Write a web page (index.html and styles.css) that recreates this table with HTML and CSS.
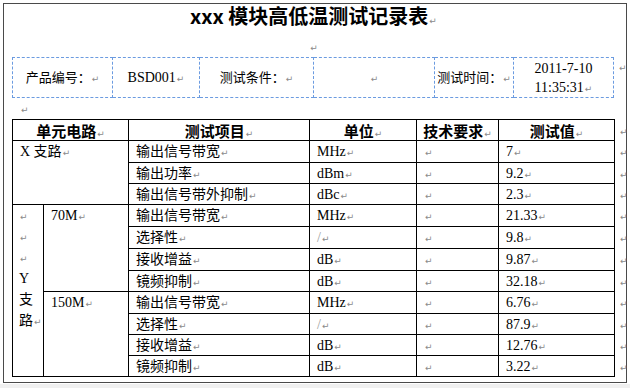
FILE: index.html
```html
<!DOCTYPE html>
<html lang="zh-CN">
<head>
<meta charset="utf-8">
<title>xxx 模块高低温测试记录表</title>
<link rel="stylesheet" href="styles.css">
</head>
<body>
<div class="page">
  <div class="frame">
    <h1 class="title">xxx 模块高低温测试记录表<span class="pm">↵</span></h1>
    <p class="blank center"><span class="pm">↵</span></p>
    <div class="inforow">
      <table class="info">
        <colgroup>
          <col class="c100"><col class="c87"><col class="c114"><col class="c121"><col class="c79"><col class="c100">
        </colgroup>
        <tr>
          <td>产品编号：<span class="pm">↵</span></td>
          <td class="lat">BSD001<span class="pm">↵</span></td>
          <td>测试条件：<span class="pm">↵</span></td>
          <td><span class="pm">↵</span></td>
          <td>测试时间：<span class="pm">↵</span></td>
          <td class="lat date">2011-7-10<br>11:35:31<span class="pm">↵</span></td>
        </tr>
      </table>
      <span class="rowmark"><span class="pm">↵</span></span>
    </div>
    <p class="blank indent"><span class="pm">↵</span></p>
    <table class="main">
      <colgroup>
        <col class="m31"><col class="m85"><col class="m181"><col class="m107"><col class="m82"><col class="m116"><col class="ceor">
      </colgroup>
      <tr class="head">
        <th colspan="2">单元电路<span class="pm">↵</span></th>
        <th>测试项目<span class="pm">↵</span></th>
        <th>单位<span class="pm">↵</span></th>
        <th>技术要求<span class="pm">↵</span></th>
        <th>测试值<span class="pm">↵</span></th>
        <td class="eor"><span class="pm">↵</span></td>
      </tr>
      <tr class="tall">
        <td colspan="2" rowspan="3" class="top">X 支路<span class="pm">↵</span></td>
        <td>输出信号带宽<span class="pm">↵</span></td>
        <td>MHz<span class="pm">↵</span></td>
        <td><span class="pm">↵</span></td>
        <td>7<span class="pm">↵</span></td>
        <td class="eor"><span class="pm">↵</span></td>
      </tr>
      <tr>
        <td>输出功率<span class="pm">↵</span></td>
        <td>dBm<span class="pm">↵</span></td>
        <td><span class="pm">↵</span></td>
        <td>9.2<span class="pm">↵</span></td>
        <td class="eor"><span class="pm">↵</span></td>
      </tr>
      <tr>
        <td>输出信号带外抑制<span class="pm">↵</span></td>
        <td>dBc<span class="pm">↵</span></td>
        <td><span class="pm">↵</span></td>
        <td>2.3<span class="pm">↵</span></td>
        <td class="eor"><span class="pm">↵</span></td>
      </tr>
      <tr class="tall">
        <td rowspan="8" class="top ycell"><span class="pm">↵</span><br><span class="pm">↵</span><br><span class="pm">↵</span><br>Y<br>支<br>路<span class="pm">↵</span></td>
        <td rowspan="4" class="top">70M<span class="pm">↵</span></td>
        <td>输出信号带宽<span class="pm">↵</span></td>
        <td>MHz<span class="pm">↵</span></td>
        <td><span class="pm">↵</span></td>
        <td>21.33<span class="pm">↵</span></td>
        <td class="eor"><span class="pm">↵</span></td>
      </tr>
      <tr class="tall">
        <td>选择性<span class="pm">↵</span></td>
        <td class="dim">/<span class="pm">↵</span></td>
        <td><span class="pm">↵</span></td>
        <td>9.8<span class="pm">↵</span></td>
        <td class="eor"><span class="pm">↵</span></td>
      </tr>
      <tr class="tall">
        <td>接收增益<span class="pm">↵</span></td>
        <td>dB<span class="pm">↵</span></td>
        <td><span class="pm">↵</span></td>
        <td>9.87<span class="pm">↵</span></td>
        <td class="eor"><span class="pm">↵</span></td>
      </tr>
      <tr>
        <td>镜频抑制<span class="pm">↵</span></td>
        <td>dB<span class="pm">↵</span></td>
        <td><span class="pm">↵</span></td>
        <td>32.18<span class="pm">↵</span></td>
        <td class="eor"><span class="pm">↵</span></td>
      </tr>
      <tr class="tall">
        <td rowspan="4" class="top">150M<span class="pm">↵</span></td>
        <td>输出信号带宽<span class="pm">↵</span></td>
        <td>MHz<span class="pm">↵</span></td>
        <td><span class="pm">↵</span></td>
        <td>6.76<span class="pm">↵</span></td>
        <td class="eor"><span class="pm">↵</span></td>
      </tr>
      <tr>
        <td>选择性<span class="pm">↵</span></td>
        <td class="dim">/<span class="pm">↵</span></td>
        <td><span class="pm">↵</span></td>
        <td>87.9<span class="pm">↵</span></td>
        <td class="eor"><span class="pm">↵</span></td>
      </tr>
      <tr>
        <td>接收增益<span class="pm">↵</span></td>
        <td>dB<span class="pm">↵</span></td>
        <td><span class="pm">↵</span></td>
        <td>12.76<span class="pm">↵</span></td>
        <td class="eor"><span class="pm">↵</span></td>
      </tr>
      <tr>
        <td>镜频抑制<span class="pm">↵</span></td>
        <td>dB<span class="pm">↵</span></td>
        <td><span class="pm">↵</span></td>
        <td>3.22<span class="pm">↵</span></td>
        <td class="eor"><span class="pm">↵</span></td>
      </tr>
    </table>
  </div>
</div>
</body>
</html>
```
FILE: styles.css
```css
html, body {
  margin: 0;
  background: #f0f0f0;
}
body {
  font-family: "Liberation Serif", "Noto Sans CJK SC", serif;
  font-size: 14px;
  color: #000;
}
.page {
  background: #fff;
  height: 384px;
  padding: 3px 3px 0 3px;
  box-sizing: border-box;
}
.frame {
  height: 380px;
  border: 1px solid #4a4a4a;
  box-sizing: border-box;
  padding: 0 11px 0 8px;
}
.title {
  margin: 0;
  height: 24px;
  font-family: "Noto Sans CJK SC", sans-serif;
  font-size: 20px;
  font-weight: 700;
  line-height: 24px;
  text-align: center;
}
.blank {
  margin: 0;
  height: 21px;
  line-height: 21px;
}
.blank.center {
  margin-top: 8px;
  text-align: center;
}
.blank.indent {
  padding-left: 8px;
}
.pm {
  font-family: "DejaVu Sans", sans-serif;
  font-size: 9px;
  font-weight: 400;
  line-height: 0;
  color: #8a8a8a;
  margin-left: 1px;
}

table {
  border-collapse: collapse;
  table-layout: fixed;
}
td, th {
  padding: 0;
}

/* info table */
.inforow {
  display: flex;
  align-items: flex-start;
}
.rowmark {
  padding: 10px 0 0 4px;
  line-height: 0;
}
.info {
  width: 602px;
  font-size: 13px;
}
.info td {
  border: 1px dashed #6b9be0;
  height: 38px;
  text-align: center;
  vertical-align: middle;
  line-height: 19px;
}
.info .lat {
  font-size: 14px;
}
.info .date {
  line-height: 19px;
  padding-top: 1px;
}
.c100 { width: 100px; }
.c87 { width: 87px; }
.c114 { width: 114px; }
.c121 { width: 121px; }
.c79 { width: 79px; }
.ceor { width: 12px; }

/* main table */
.main {
  width: 614px;
}
.main td, .main th {
  border: 1px solid #000;
  line-height: 19px;
  text-align: left;
  vertical-align: middle;
  padding-left: 7px;
  white-space: nowrap;
}
.main tr {
  height: 21px;
}
.main tr.tall {
  height: 22px;
}
.main th {
  font-family: "Noto Sans CJK SC", sans-serif;
  font-size: 15px;
  font-weight: 700;
  text-align: center;
  padding-left: 0;
}
.main td.top {
  vertical-align: top;
  padding-top: 1px;
}
.main td.ycell {
  padding-left: 6px;
  line-height: 21px;
  padding-top: 0;
}
.main td.dim {
  color: #a0a0a0;
}
.main td.eor {
  border: none;
  padding-left: 4px;
}
.m31 { width: 31px; }
.m85 { width: 85px; }
.m181 { width: 181px; }
.m107 { width: 107px; }
.m82 { width: 82px; }
.m116 { width: 116px; }
```
